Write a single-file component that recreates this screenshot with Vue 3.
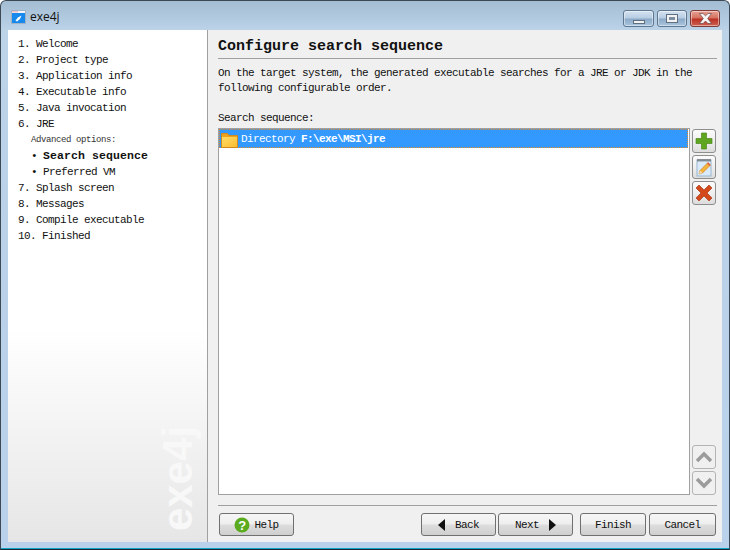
<script setup>
const steps = [
  { text: '1. Welcome' }, { text: '2. Project type' }, { text: '3. Application info' },
  { text: '4. Executable info' }, { text: '5. Java invocation' }, { text: '6. JRE' },
  { text: 'Advanced options:', kind: 'note' },
  { text: 'Search sequence', kind: 'sub active', bullet: true }, { text: 'Preferred VM', kind: 'sub', bullet: true },
  { text: '7. Splash screen' }, { text: '8. Messages' }, { text: '9. Compile executable' }, { text: '10. Finished' }
]
</script>

<template>
  <div class="window">
    <header class="titlebar">
      <svg class="appicon" width="15" height="14" viewBox="0 0 15 14">
        <rect x="0.5" y="0.5" width="14" height="13" fill="#f4f6fa" stroke="#9fb2c8"/>
        <rect x="1" y="3" width="13" height="10" fill="#1788ec"/>
        <path d="M1.500 1.800h1M3.500 1.800h1M5.500 1.800h1" stroke="#d9534f"/>
        <path d="M4.500 10.500 7 7.500l3.500-2-1.500 3.500-3 2.500z" fill="#fff"/>
      </svg>
      <span class="title">exe4j</span>
      <div class="winbtns">
        <div class="winbtn min"><i></i></div>
        <div class="winbtn max"><i></i></div>
        <div class="winbtn close">
          <svg width="15" height="11" viewBox="0 0 15 11"><path d="M1.500.5h3.500l2.500 2.300L10 .5h3.500L9.700 5.500l3.800 5H10L7.500 8 5 10.500H1.500l3.800-5z" fill="#f6f6f6" stroke="#6b4a48" stroke-width=".7"/></svg>
        </div>
      </div>
    </header>

    <div class="client">
      <aside class="sidebar">
        <div v-for="s in steps" :key="s.text" class="step" :class="s.kind"><span v-if="s.bullet" class="bullet">•</span>{{ s.text }}</div>
        <div class="watermark">exe4j</div>
      </aside>

      <main class="main">
        <h1 class="heading">Configure search sequence</h1>
        <p class="desc">On the target system, the generated executable searches for a JRE or JDK in the following configurable order.</p>
        <div class="label">Search sequence:</div>

        <div class="listarea">
          <div class="list">
            <div class="row">
              <svg width="17" height="15" viewBox="0 0 17 15">
                <defs>
                  <linearGradient id="folderfill" x1="0" y1="0" x2="1" y2="1">
                    <stop offset="0" stop-color="#ffdc6a"/>
                    <stop offset="1" stop-color="#fbbd2e"/>
                  </linearGradient>
                </defs>
                <path d="M.5 14.500V.5h6l1.500 2h8.500v12z" fill="#eda21d" stroke="#d18a1e"/>
                <path d="M1 4h15v10H1z" fill="url(#folderfill)"/>
              </svg>
              <span class="rowtext">Directory <b>F:\exe\MSI\jre</b></span>
            </div>
          </div>
          <div class="tools">
            <button class="tool">
              <svg width="18" height="18" viewBox="0 0 18 18"><path d="M6.500 1h5v5.500H17v5h-5.500V17h-5v-5.500H1v-5h5.500z" fill="#5fa51f" stroke="#4b8a18" stroke-width=".7"/></svg>
            </button>
            <button class="tool">
              <svg width="20" height="20" viewBox="0 0 20 20">
                <rect x="3" y="3" width="14" height="16" fill="#d9eafa" stroke="#9ab6d0"/>
                <path d="M4 2v2.500M6 2v2.500M8 2v2.500M10 2v2.500M12 2v2.500M14 2v2.500M16 2v2.500" stroke="#444"/>
                <path d="M5 17l1-3.500 8-8 2.500 2.500-8 8z" fill="#f5b53b" stroke="#c9812a" stroke-width=".7"/>
                <path d="M13 6.500l1-1 2.500 2.500-1 1z" fill="#e2574c"/>
                <path d="M5 17l1-3.500 2.500 2.500z" fill="#f6dfb8"/>
              </svg>
            </button>
            <button class="tool">
              <svg width="20" height="20" viewBox="0 0 20 20"><path d="M2 5l3-3 5 5 5-5 3 3-5 5 5 5-3 3-5-5-5 5-3-3 5-5z" fill="#d4491c" stroke="#a93a18" stroke-width=".7"/></svg>
            </button>
            <div class="spacer"></div>
            <button class="tool dim">
              <svg width="18" height="12" viewBox="0 0 18 12"><path d="M2 10l7-7 7 7" fill="none" stroke="#9b9b9b" stroke-width="3.400"/></svg>
            </button>
            <button class="tool dim">
              <svg width="18" height="12" viewBox="0 0 18 12"><path d="M2 2l7 7 7-7" fill="none" stroke="#9b9b9b" stroke-width="3.400"/></svg>
            </button>
          </div>
        </div>

        <footer class="footer">
          <button class="btn help">
            <svg width="16" height="16" viewBox="0 0 16 16">
              <circle cx="8" cy="8" r="7.500" fill="#5aab1e"/>
              <text x="8" y="12.500" text-anchor="middle" class="qmark">?</text>
            </svg>
            <span>Help</span>
          </button>
          <div class="grow"></div>
          <button class="btn nav">
            <svg width="8" height="12" viewBox="0 0 8 12"><path d="M7 0v12L0 6z" fill="#111"/></svg>
            <span>Back</span>
          </button>
          <button class="btn nav next">
            <span>Next</span>
            <svg width="8" height="12" viewBox="0 0 8 12"><path d="M1 0v12l7-6z" fill="#111"/></svg>
          </button>
          <button class="btn plain finish">Finish</button>
          <button class="btn plain cancel">Cancel</button>
        </footer>
      </main>
    </div>
  </div>
</template>

<style>
html, body { margin: 0; background: #fff; overflow: hidden; }
</style>

<style scoped>
.window {
  width: 730px; height: 550px; box-sizing: border-box;
  border: 1px solid #3d4a56; border-bottom-color: #1b2a38; border-radius: 6px 6px 0 0;
  background: linear-gradient(#a3bdd3 0, #bcd3e8 30px, #b9d1ea 100%);
  box-shadow: inset 0 -1px #12a3c8;
  padding: 0 7px 7px; display: flex; flex-direction: column;
  font-family: "Liberation Mono", monospace; font-size: 11px; letter-spacing: -0.6px; color: #111;
}
.titlebar { height: 29px; flex: none; display: flex; align-items: center; }
.appicon { margin: 2px 4px 0 3px; }
.title { font: 12px "Open Sans", sans-serif; letter-spacing: 0; color: #111; margin-top: 2px; }
.winbtns { margin-left: auto; margin-right: 2px; display: flex; gap: 3px; align-self: flex-start; margin-top: 9px; }
.winbtn {
  height: 17px; width: 30px; box-sizing: border-box; border: 1px solid #5f7690; border-radius: 3px;
  background: linear-gradient(#d4e2f0 0, #b7cde3 48%, #8ba9c8 52%, #a9c4dd 100%);
  box-shadow: inset 0 0 0 1px rgba(255,255,255,.45);
  display: flex; align-items: center; justify-content: center;
}
.winbtn i { display: block; box-sizing: border-box; border: 1px solid #5f6f80; }
.min { width: 31px; }
.min i { width: 12px; height: 4px; background: #f2f2f2; margin-top: 6px; }
.max i { width: 12px; height: 9px; box-shadow: inset 0 0 0 2px #f2f2f2; background: #7d8fa3; }
.close { border-color: #7d3a36; background: linear-gradient(#e8a093 0, #d5705f 48%, #b92f22 52%, #d0604f 100%); }
.client { flex: 1; display: flex; min-height: 0; background: #f0f0f0; }
.sidebar {
  width: 200px; flex: none; position: relative; overflow: hidden; box-sizing: border-box; padding: 6px 0 0 10px;
  background: linear-gradient(#fff 0, #fff 300px, #e6e6e6 100%);
  border-right: 1px solid #a0a0a0;
}
.step { height: 16px; line-height: 16px; white-space: pre; }
.note { font-size: 9px; letter-spacing: -.4px; padding-left: 13px; color: #333; }
.sub { padding-left: 13px; }
.bullet { display: inline-block; width: 12px; font-weight: normal; font-size: 11px; letter-spacing: 0; }
.active { font-weight: bold; font-size: 11.500px; letter-spacing: .1px; }
.watermark {
  position: absolute; left: 148px; bottom: 11px; writing-mode: vertical-rl; transform: rotate(180deg);
  font: bold 42px "Liberation Sans", sans-serif; letter-spacing: 0; color: #f8f8f8; line-height: 44px;
}
.main { flex: 1; min-width: 0; display: flex; flex-direction: column; padding: 0 5px 6px 10px; }
.heading {
  margin: 0; height: 26px; padding-top: 2px; line-height: 29px; font-size: 15px; font-weight: bold; letter-spacing: 0; color: #111;
  border-bottom: 1px solid #a0a0a0;
}
.desc { margin: 7px 20px 0 0; line-height: 15px; height: 30px; }
.label { margin-top: 15px; line-height: 14px; height: 14px; }
.listarea { flex: 1; display: flex; min-height: 0; margin-top: 3px; gap: 2px; padding-right: 1px; }
.list { flex: 1; border: 1px solid #a0a0a0; background: #fff; padding: 0 1px 0 0; box-sizing: border-box; }
.row {
  height: 19px; box-sizing: border-box; background: #3399ff; border: 1px dotted #e08a2c; color: #fff;
  display: flex; align-items: center; padding-left: 1px; gap: 3px;
}
.row svg { margin-top: 3px; }
.row b { font-weight: bold; }
.rowtext { white-space: pre; }
.tools { width: 24px; flex: none; display: flex; flex-direction: column; gap: 2px; padding-top: 1px; }
.tool {
  width: 24px; height: 24px; flex: none; padding: 0; box-sizing: border-box; border: 1px solid #8e8e8e; border-radius: 3px;
  background: linear-gradient(#fbfbfb 0, #efefef 50%, #dcdcdc 100%);
  display: flex; align-items: center; justify-content: center;
}
.dim { border-color: #b4b4b4; background: #f0f0f0; }
.spacer { flex: 1; }
.footer { margin-top: 10px; padding: 7px 1px 0 0; border-top: 1px solid #a0a0a0; display: flex; flex: none; }
.btn {
  height: 23px; padding: 0; box-sizing: border-box; border: 1px solid #707070; border-radius: 3px;
  background: linear-gradient(#f6f6f6 0, #efefef 45%, #dcdcdc 55%, #cfcfcf 100%);
  font: inherit; letter-spacing: inherit; color: #111;
  display: flex; align-items: center; justify-content: center; gap: 6px;
}
.help { width: 75px; margin-left: 1px; gap: 4px; }
.qmark { font: bold 13px "Liberation Sans", sans-serif; fill: #fff; }
.grow { flex: 1; }
.nav { width: 75px; gap: 9px; }
.next { margin-left: 2px; }
.finish { width: 66px; margin-left: 7px; }
.cancel { width: 67px; margin-left: 3px; }
</style>
